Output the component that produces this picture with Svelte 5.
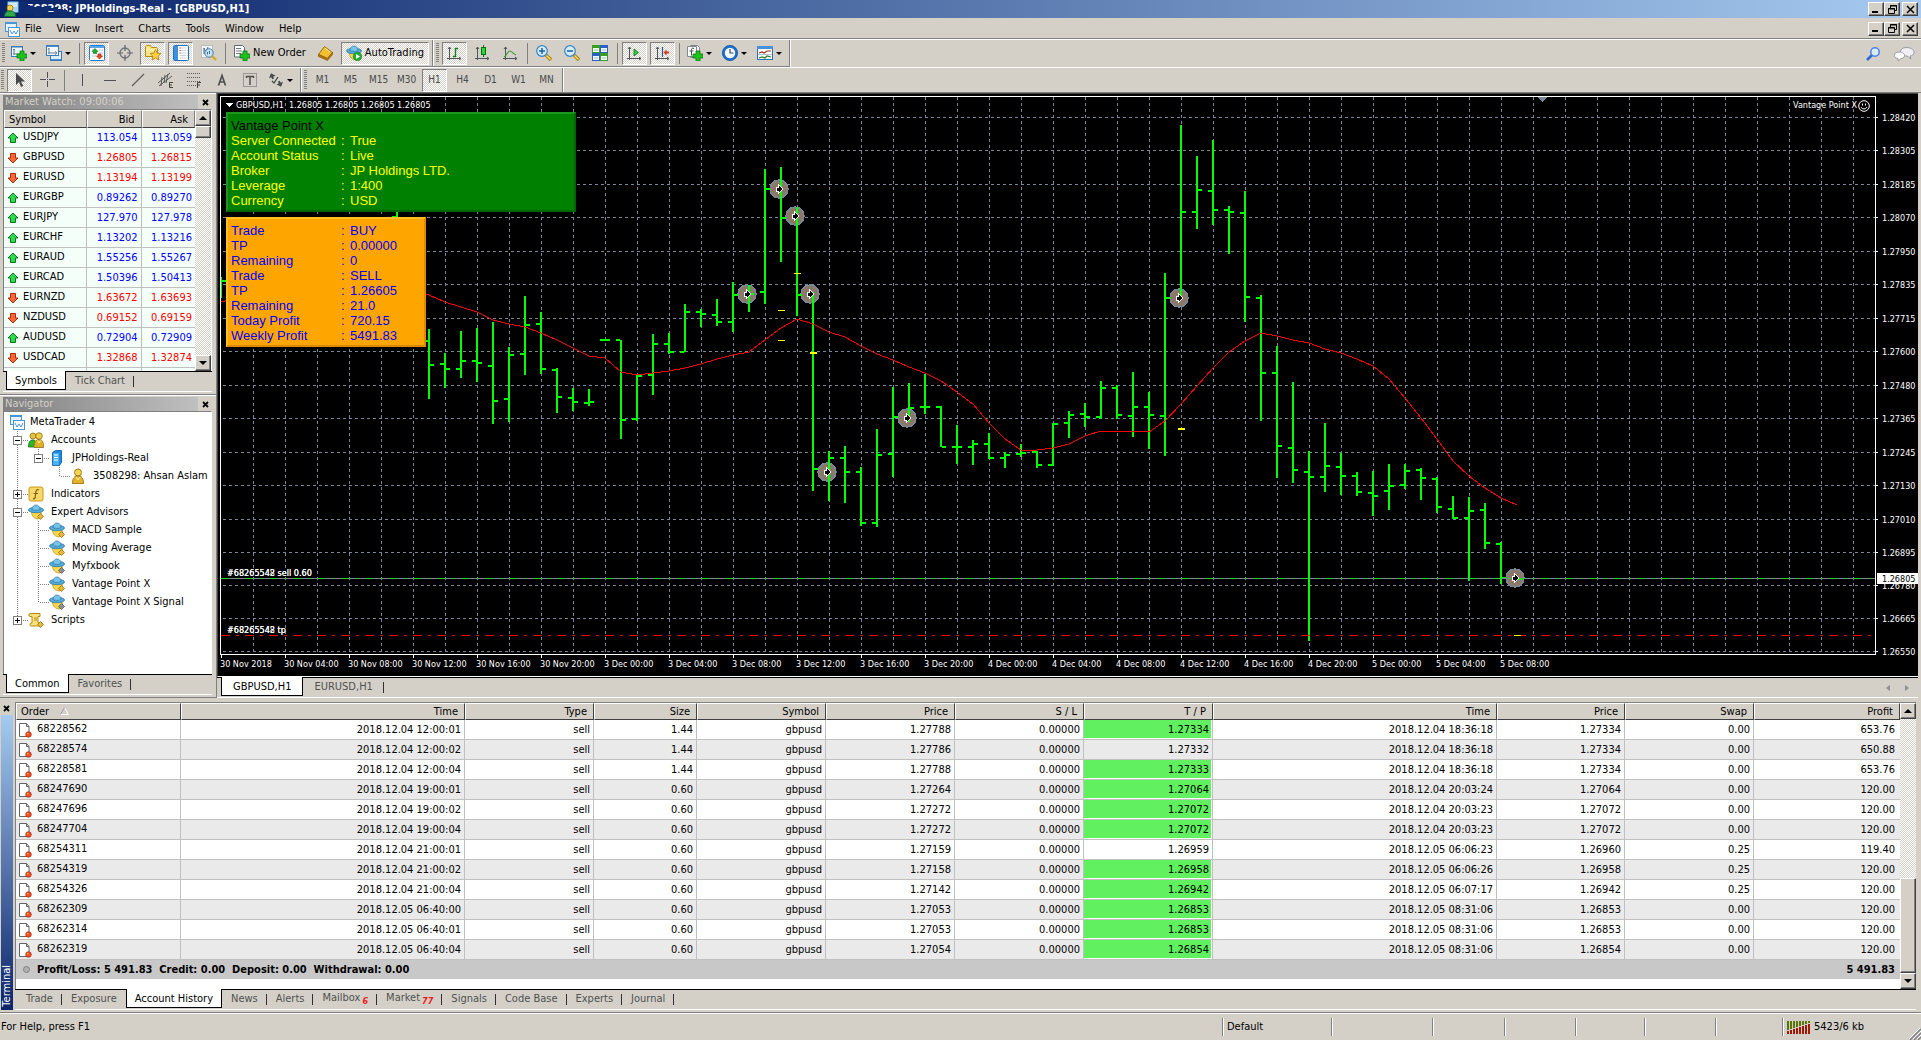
<script>
  const menus = ["File", "View", "Insert", "Charts", "Tools", "Window", "Help"];

  const mainTools = [
    { icon: "newChart", menu: true },
    { icon: "profiles", menu: true },
    { sep: true },
    { icon: "quotes", on: true },
    { icon: "target" },
    { icon: "folder", on: true },
    { icon: "terminal", on: true },
    { icon: "tester" },
    { sep: true },
    { icon: "newOrder", label: "New Order" },
    { icon: "tag" },
    { icon: "expert", label: "AutoTrading", on: true },
    { grip: true },
    { icon: "bars", on: true },
    { icon: "candles" },
    { icon: "line" },
    { sep: true },
    { icon: "zoomIn" },
    { icon: "zoomOut" },
    { icon: "tiles" },
    { sep: true },
    { icon: "scroll", on: true },
    { icon: "shift", on: true },
    { sep: true },
    { icon: "indicator", menu: true },
    { icon: "clock", menu: true },
    { icon: "template", menu: true },
  ];

  const lineTools = [
    { icon: "cursor", on: true },
    { icon: "cross" },
    { sep: true },
    { icon: "vline" },
    { icon: "hline" },
    { icon: "trend" },
    { icon: "channel" },
    { icon: "fibo" },
    { icon: "textA" },
    { icon: "textT" },
    { icon: "arrows", menu: true },
    { grip: true },
  ];

  const timeframes = ["M1", "M5", "M15", "M30", "H1", "H4", "D1", "W1", "MN"];

  const quotes = [
    ["USDJPY", "113.054", "113.059", 1],
    ["GBPUSD", "1.26805", "1.26815", 0],
    ["EURUSD", "1.13194", "1.13199", 0],
    ["EURGBP", "0.89262", "0.89270", 1],
    ["EURJPY", "127.970", "127.978", 1],
    ["EURCHF", "1.13202", "1.13216", 1],
    ["EURAUD", "1.55256", "1.55267", 1],
    ["EURCAD", "1.50396", "1.50413", 1],
    ["EURNZD", "1.63672", "1.63693", 0],
    ["NZDUSD", "0.69152", "0.69159", 0],
    ["AUDUSD", "0.72904", "0.72909", 1],
    ["USDCAD", "1.32868", "1.32874", 0],
  ];

  // rails: one letter per indent cell (b = blank, v = line, t = tee, l = corner)
  const tree = [
    { rails: "", icon: "app", text: "MetaTrader 4" },
    { rails: "t", box: "-", icon: "accounts", text: "Accounts" },
    { rails: "vl", box: "-", icon: "server", text: "JPHoldings-Real" },
    { rails: "vbl", icon: "user", text: "3508298: Ahsan Aslam" },
    { rails: "t", box: "+", icon: "func", text: "Indicators" },
    { rails: "t", box: "-", icon: "advisor", text: "Expert Advisors" },
    { rails: "vt", icon: "advisor", text: "MACD Sample" },
    { rails: "vt", icon: "advisor", text: "Moving Average" },
    { rails: "vt", icon: "advisorOff", text: "Myfxbook" },
    { rails: "vt", icon: "advisor", text: "Vantage Point X" },
    { rails: "vl", icon: "advisorOff", text: "Vantage Point X Signal" },
    { rails: "l", box: "+", icon: "script", text: "Scripts" },
  ];

  const step = 16;

  // slot, high, low, open, close
  const bars = [
    [0, 180, 201, 190, 184], [11, 100, 160, 120, 140],
    [13, 232, 302, 244, 268], [14, 256, 291, 267, 272], [15, 234, 281, 272, 264],
    [16, 231, 285, 264, 266], [17, 225, 327, 269, 304], [18, 250, 325, 302, 258],
    [19, 199, 278, 257, 228], [20, 215, 277, 227, 272], [21, 271, 316, 273, 300],
    [22, 291, 314, 301, 305], [23, 292, 309, 306, 305], [24, 242, 244, 243, 243],
    [25, 243, 342, 243, 323], [26, 278, 324, 322, 279], [27, 237, 298, 278, 247],
    [28, 236, 257, 247, 255], [29, 207, 255, 255, 215], [30, 212, 230, 215, 217],
    [31, 202, 229, 218, 225], [32, 185, 235, 225, 198], [33, 188, 215, 198, 197],
    [34, 72, 207, 195, 92], [35, 70, 165, 92, 121], [36, 110, 219, 120, 198],
    [37, 195, 394, 198, 372], [38, 354, 404, 376, 361], [39, 349, 406, 361, 375],
    [40, 370, 429, 375, 426], [41, 332, 430, 426, 358], [42, 290, 380, 357, 320],
    [43, 286, 325, 321, 311], [44, 277, 317, 310, 310], [45, 309, 350, 310, 350],
    [46, 328, 367, 350, 350], [47, 343, 368, 350, 347], [48, 336, 362, 347, 361],
    [49, 355, 371, 361, 358], [50, 347, 360, 357, 356], [51, 354, 371, 355, 368],
    [52, 326, 369, 368, 327], [53, 314, 341, 326, 318], [54, 306, 330, 317, 320],
    [55, 284, 322, 320, 291], [56, 288, 322, 291, 318], [57, 275, 340, 319, 310],
    [58, 295, 352, 310, 318], [59, 176, 359, 319, 201], [60, 28, 201, 201, 115],
    [61, 59, 132, 115, 93], [62, 43, 128, 94, 113], [63, 109, 157, 113, 115],
    [64, 94, 225, 116, 200], [65, 198, 324, 201, 276], [66, 249, 381, 276, 349],
    [67, 285, 386, 351, 373], [68, 354, 544, 375, 380], [69, 326, 395, 380, 369],
    [70, 356, 398, 370, 379], [71, 375, 399, 379, 395], [72, 374, 419, 396, 399],
    [73, 367, 413, 394, 389], [74, 367, 392, 388, 374], [75, 371, 403, 373, 381],
    [76, 380, 416, 382, 410], [77, 399, 422, 412, 421], [78, 400, 484, 421, 414],
    [79, 406, 452, 413, 446], [80, 445, 487, 447, 481], [81, 481, 483, 482, 482],
  ];

  // moving average, from slot 12 on
  const average = [
    193, 198, 205, 210, 215, 223, 227, 230, 236, 243, 251, 259, 261, 275, 278, 276, 274, 271,
    267, 262, 258, 255, 243, 231, 222, 227, 235, 240, 249, 257, 263, 270, 276, 284, 295, 307,
    326, 342, 353, 353, 351, 347, 339, 334, 334, 334, 335, 324, 307, 289, 271, 255, 244, 236,
    239, 243, 246, 252, 256, 262, 269, 282, 301, 321, 342, 364, 379, 391, 401, 408,
  ];
  const averagePoints =
    "0,204 4,204 " + average.map((y, i) => `${(i + 12) * step},${y}`).join(" ");

  const signals = [
    [558, 92], [574, 119], [526, 197], [589, 197],
    [606, 375], [686, 321], [958, 201], [1294, 481],
  ];

  // x, y, thickness
  const levels = [
    [576, 176, 1], [560, 213, 1], [560, 243, 1],
    [592, 255, 2], [960, 331, 2], [1296, 538, 1],
  ];

  const prices = [
    ["1.28420", 20], ["1.28305", 53], ["1.28185", 87], ["1.28070", 120],
    ["1.27950", 154], ["1.27835", 187], ["1.27715", 221], ["1.27600", 254],
    ["1.27480", 288], ["1.27365", 321], ["1.27245", 355], ["1.27130", 388],
    ["1.27010", 422], ["1.26895", 455], ["1.26780", 488], ["1.26665", 521],
    ["1.26550", 554],
  ];
  const bidY = 481;
  const tpY = 538;

  const times = [
    "30 Nov 2018", "30 Nov 04:00", "30 Nov 08:00", "30 Nov 12:00", "30 Nov 16:00", "30 Nov 20:00",
    "3 Dec 00:00", "3 Dec 04:00", "3 Dec 08:00", "3 Dec 12:00", "3 Dec 16:00", "3 Dec 20:00",
    "4 Dec 00:00", "4 Dec 04:00", "4 Dec 08:00", "4 Dec 12:00", "4 Dec 16:00", "4 Dec 20:00",
    "5 Dec 00:00", "5 Dec 04:00", "5 Dec 08:00",
  ];

  const serverInfo = [
    ["Server Connected", "True"],
    ["Account Status", "Live"],
    ["Broker", "JP Holdings LTD."],
    ["Leverage", "1:400"],
    ["Currency", "USD"],
  ];

  const tradeInfo = [
    ["Trade", "BUY"],
    ["TP", "0.00000"],
    ["Remaining", "0"],
    ["Trade", "SELL"],
    ["TP", "1.26605"],
    ["Remaining", "21.0"],
    ["Today Profit", "720.15"],
    ["Weekly Profit", "5491.83"],
  ];

  const columns = [
    ["Order", 165], ["Time", 284], ["Type", 129], ["Size", 103], ["Symbol", 129],
    ["Price", 129], ["S / L", 129], ["T / P", 129], ["Time", 284], ["Price", 128],
    ["Swap", 129], ["Profit", 146],
  ];

  // order, open time, size, open price, t/p, close time, close price, swap, profit, t/p hit
  const history = [
    ["68228562", "2018.12.04 12:00:01", "1.44", "1.27788", "1.27334", "2018.12.04 18:36:18", "1.27334", "0.00", "653.76", true],
    ["68228574", "2018.12.04 12:00:02", "1.44", "1.27786", "1.27332", "2018.12.04 18:36:18", "1.27334", "0.00", "650.88", false],
    ["68228581", "2018.12.04 12:00:04", "1.44", "1.27788", "1.27333", "2018.12.04 18:36:18", "1.27334", "0.00", "653.76", true],
    ["68247690", "2018.12.04 19:00:01", "0.60", "1.27264", "1.27064", "2018.12.04 20:03:24", "1.27064", "0.00", "120.00", true],
    ["68247696", "2018.12.04 19:00:02", "0.60", "1.27272", "1.27072", "2018.12.04 20:03:23", "1.27072", "0.00", "120.00", true],
    ["68247704", "2018.12.04 19:00:04", "0.60", "1.27272", "1.27072", "2018.12.04 20:03:23", "1.27072", "0.00", "120.00", true],
    ["68254311", "2018.12.04 21:00:01", "0.60", "1.27159", "1.26959", "2018.12.05 06:06:23", "1.26960", "0.25", "119.40", false],
    ["68254319", "2018.12.04 21:00:02", "0.60", "1.27158", "1.26958", "2018.12.05 06:06:26", "1.26958", "0.25", "120.00", true],
    ["68254326", "2018.12.04 21:00:04", "0.60", "1.27142", "1.26942", "2018.12.05 06:07:17", "1.26942", "0.25", "120.00", true],
    ["68262309", "2018.12.05 06:40:00", "0.60", "1.27053", "1.26853", "2018.12.05 08:31:06", "1.26853", "0.00", "120.00", true],
    ["68262314", "2018.12.05 06:40:01", "0.60", "1.27053", "1.26853", "2018.12.05 08:31:06", "1.26853", "0.00", "120.00", true],
    ["68262319", "2018.12.05 06:40:04", "0.60", "1.27054", "1.26854", "2018.12.05 08:31:06", "1.26854", "0.00", "120.00", true],
  ];

  const terminalTabs = [
    ["Trade"], ["Exposure"], ["Account History"], ["News"], ["Alerts"], ["Mailbox", "6"],
    ["Market", "77"], ["Signals"], ["Code Base"], ["Experts"], ["Journal"],
  ];

  const statusCells = [101, 72, 71, 69, 71, 67];

  let frame = $state("H1");
  let terminalTab = $state("Account History");
</script>

{#snippet icon(name)}
  <svg class="icon" width="16" height="16" viewBox="0 0 16 16" aria-hidden="true">
    {#if name === "newChart"}
      <rect x=".5" y="1.5" width="11" height="10" fill="#eaf4fc" stroke="#3c78b4" />
      <path d="M1 2h10" stroke="#3c78b4" />
      <path d="M3 4v6M2 9h8M3 4l-1 1M3 4l1 1" stroke="#6a7c90" fill="none" />
      <path d="M9 6h4v3h3v4h-3v3H9v-3H6V9h3z" fill="#1fc01f" stroke="#087808" stroke-width=".8" />
    {:else if name === "profiles"}
      <rect x="4.5" y="6.5" width="11" height="9" fill="#dcecf8" stroke="#3c78b4" />
      <rect x=".5" y=".5" width="12" height="10" fill="#f4faff" stroke="#3c78b4" />
      <path d="M1 1.5h11M5 14.500h10" stroke="#4a90d0" />
      <path d="M3 3v6M2 8h9M3 3l-1 1.500M9 6.500l2 1.500-2 1.500" stroke="#6a7c90" fill="none" />
    {:else if name === "quotes"}
      <rect x=".5" y=".5" width="15" height="15" rx="1" fill="#fff" stroke="#2878c8" />
      <path d="M1 1h14v2H1z" fill="#58a8f0" />
      <path d="M3 5h3M10 5h4M3 8h2M10 8h4M3 11h4M13 11h1" stroke="#b8c4d0" />
      <path d="M6 3.500l3 3H7.500v2h-3v-2H3z" fill="#20b030" stroke="#087018" stroke-width=".6" />
      <path d="M10.500 14l-3-3H9V9h3v2h1.500z" fill="#f04818" stroke="#902008" stroke-width=".6" />
    {:else if name === "target"}
      <circle cx="8" cy="8" r="5" fill="none" stroke="#70747a" stroke-width="1.300" />
      <path d="M8 0v6M8 10v6M0 8h6M10 8h6" stroke="#60646a" stroke-width="1.200" />
    {:else if name === "folder"}
      <path d="M.5 11.500v-10l1-1h4l1 2h5l1 1v8z" fill="#f8e488" stroke="#b88c10" />
      <path d="M1 5h11" stroke="#fff8c8" />
      <path d="M10.500 4.500l1.700 3.600 3.600.4-2.700 2.600.8 3.900-3.400-2-3.500 2 .8-3.900-2.600-2.600 3.600-.4z" fill="#fcd040" stroke="#b07c08" stroke-width=".8" />
    {:else if name === "terminal"}
      <rect x=".5" y=".5" width="15" height="15" rx="1" fill="#fff" stroke="#2070c0" />
      <rect x="1" y="1" width="4" height="14" fill="#3c90e0" />
      <path d="M7 3h8M7 5.500h8M7 8h8M7 10.500h8M7 13h8" stroke="#c8d4e0" stroke-dasharray="6 1" />
      <path d="M6.500 3h1M6.500 5.500h1M6.500 8h1" stroke="#d02020" />
    {:else if name === "tester"}
      <rect x=".5" y=".5" width="11" height="12" fill="#f4f4f4" stroke="#9098a0" stroke-dasharray="1 1" />
      <path d="M3 9V3l2 4 2-5" stroke="#486890" fill="none" />
      <circle cx="8" cy="8" r="4.200" fill="#bfe0f8" fill-opacity=".85" stroke="#4080b0" />
      <path d="M6.500 9.500V7M8.500 9V6" stroke="#486890" />
      <path d="M11 11l4 4" stroke="#d8a820" stroke-width="2.400" />
    {:else if name === "newOrder"}
      <path d="M.5.5h8l2 2v9.500H.5z" fill="#fff" stroke="#606870" />
      <path d="M2 3.500h5M2 6h6M2 8.500h5" stroke="#707880" stroke-width="1.200" />
      <path d="M9 6h4v3h3v4h-3v3H9v-3H6V9h3z" fill="#1fc01f" stroke="#087808" stroke-width=".8" />
    {:else if name === "tag"}
      <path d="M7.500 1.500l8 6-5 6-9-4z" fill="#f0c030" stroke="#a06808" />
      <path d="M1.500 9.500l9 4 5-6v2l-5 6-9-4z" fill="#b87c10" stroke="#804c00" stroke-width=".6" />
      <path d="M8 3l5 4" stroke="#fff0a0" />
    {:else if name === "expert" || name === "advisor" || name === "advisorOff"}
      <path d="M3.500 8c0 4 3 7 7 7l3-5-1-3z" fill="#f8d848" stroke="#b88810" stroke-width=".7" />
      <ellipse cx="8" cy="6" rx="7.500" ry="2.700" fill="#58acd8" stroke="#2878a8" stroke-width=".8" />
      <path d="M4 5.500C4 -.5 12 -.5 12 5.500c-2 1.200-6 1.200-8 0z" fill="#78c4e8" stroke="#2878a8" stroke-width=".7" />
      {#if name === "expert"}
        <circle cx="11.500" cy="11.500" r="4.300" fill="#20b030" stroke="#087018" stroke-width=".5" />
        <path d="M10 9l4 2.500-4 2.500z" fill="#fff" />
      {:else}
        <path d="M12.500 9.500l3 3-3 3-3-3z" fill={name === "advisor" ? "#e8b838" : "#909090"} stroke={name === "advisor" ? "#987010" : "#585858"} stroke-width=".8" />
      {/if}
    {:else if name === "bars"}
      <path d="M3.500 2v13M1 13.500h14M2 4l1.500-2L5 4M13 12l2 1.500-2 1.500" stroke="#505458" fill="none" />
      <path d="M9.500 3v9M9.500 3.500H12M7 11.500h2.500" stroke="#108018" stroke-width="1.400" />
    {:else if name === "candles"}
      <path d="M3.500 2v13M1 13.500h14M2 4l1.500-2L5 4M13 12l2 1.500-2 1.500" stroke="#505458" fill="none" />
      <path d="M9.500 0v12" stroke="#087010" />
      <rect x="7.500" y="2.500" width="4" height="7" fill="#28d838" stroke="#087010" />
    {:else if name === "line"}
      <path d="M3.500 2v13M1 13.500h14M2 4l1.500-2L5 4M13 12l2 1.500-2 1.500" stroke="#505458" fill="none" />
      <path d="M2 12c3-1 3-6 6-6 2 0 3 3 6 4" stroke="#40983c" stroke-width="1.200" fill="none" />
    {:else if name === "zoomIn" || name === "zoomOut"}
      <path d="M10 10l5 5" stroke="#a87c10" stroke-width="3.400" />
      <path d="M10.500 10.500l4 4" stroke="#f8dc60" stroke-width="1.600" />
      <circle cx="6" cy="6" r="5.300" fill="#d4ecfc" stroke="#3484c8" stroke-width="1.200" />
      <path d="M3 6h6" stroke="#2468a0" stroke-width="1.600" />
      {#if name === "zoomIn"}<path d="M6 3v6" stroke="#2468a0" stroke-width="1.600" />{/if}
    {:else if name === "tiles"}
      <path d="M0 0h8v8H0zM8 8h8v8H8z" fill="#38a020" />
      <path d="M8 0h8v8H8zM0 8h8v8H0z" fill="#2860c8" />
      <path d="M1 3h6v4H1zM9 3h6v4H9zM1 11h6v4H1zM9 11h6v4H9z" fill="#f4f8fc" />
      <path d="M2 5h4M10 5h4M2 13h4M10 13h4" stroke="#a8b4c0" />
    {:else if name === "scroll"}
      <path d="M3.500 2v13M1 13.500h14M2 4l1.500-2L5 4M13 12l2 1.500-2 1.500" stroke="#505458" fill="none" />
      <path d="M8 4l4.500 3.500L8 11z" fill="#30d040" stroke="#087010" stroke-width=".8" />
    {:else if name === "shift"}
      <path d="M3.500 2v13M1 13.500h14M2 4l1.500-2L5 4M13 12l2 1.500-2 1.500" stroke="#505458" fill="none" />
      <path d="M8.500 2v10" stroke="#2060a0" stroke-width="1.200" />
      <path d="M9.500 7.500l3-3v2H15v2h-2.500v2z" fill="#d83810" />
    {:else if name === "indicator"}
      <path d="M3.500.5h7l2 2v10h-9z" fill="#f8f8f8" stroke="#808890" />
      <path d="M.5 1.500h9v10h-9z" fill="#fff" stroke="#808890" />
      <path d="M7 3.500c-2-1-2.500 0-2.500 2v5M2.500 6h4" stroke="#484c50" fill="none" />
      <path d="M9 6h4v3h3v4h-3v3H9v-3H6V9h3z" fill="#1fc01f" stroke="#087808" stroke-width=".8" />
    {:else if name === "clock"}
      <circle cx="8" cy="8" r="6.500" fill="#f4faff" stroke="#1c70d0" stroke-width="2.600" />
      <circle cx="8" cy="8" r="7.600" fill="none" stroke="#0c4898" stroke-width=".6" />
      <path d="M8 4v4h3.500" stroke="#404850" fill="none" stroke-width="1.200" />
    {:else if name === "template"}
      <rect x=".5" y="1.500" width="15" height="13" fill="#fff" stroke="#3070b0" />
      <path d="M0 1h16v3H0z" fill="#4890d8" />
      <path d="M2 8l3-1 2 1 3-2 4 0" stroke="#a03018" fill="none" stroke-width="1.200" />
      <path d="M1 9.500h14" stroke="#b0c4d8" />
      <path d="M2 13l3-1 3 1 2-2 4 1" stroke="#208030" fill="none" stroke-width="1.200" />
    {:else if name === "cursor"}
      <path d="M4 1v12l3-3 2 5 2.200-1L9 9.500h4z" fill="#484848" />
    {:else if name === "cross"}
      <path d="M7.500 0v6M7.500 9v6M0 7.500h6M9 7.500h6M7 7.500h1" stroke="#505050" />
    {:else if name === "vline"}
      <path d="M8.500 2v12" stroke="#505050" />
    {:else if name === "hline"}
      <path d="M2 8.500h12" stroke="#505050" />
    {:else if name === "trend"}
      <path d="M2 14L14 2" stroke="#606060" stroke-width="1.300" />
    {:else if name === "channel"}
      <path d="M0 11L12 1M1 14L14 4M4 5l-1 9M7 3l-1 8M10 2L8 11" stroke="#585858" fill="none" />
      <path d="M15 10.500h-3.500v5H15M11.500 13H14" stroke="#404040" fill="none" />
    {:else if name === "fibo"}
      <path d="M1 1.500h14M1 5.500h14M1 9.500h14M1 13.500h9" stroke="#585858" stroke-dasharray="1 1" />
      <path d="M15 10.500h-3.500V16M11.500 13H14" stroke="#404040" fill="none" />
    {:else if name === "textA"}
      <path d="M4.500 13.500L8 3.500l3.500 10M5.800 10h4.400" stroke="#505050" stroke-width="1.700" fill="none" />
    {:else if name === "textT"}
      <rect x="1.500" y="1.500" width="13" height="13" fill="none" stroke="#606060" stroke-dasharray="1 1" />
      <path d="M4 4.500h8M8 4v9M4.500 4v2M11.500 4v2" stroke="#505050" stroke-width="1.500" />
    {:else if name === "arrows"}
      <path d="M4 1l3.500 4H5v2H3V5H.5z" fill="#484848" transform="rotate(-20 4 4)" />
      <path d="M12 15l-3.500-4H11V9h2v2h2.500z" fill="#484848" transform="rotate(-20 12 12)" />
      <path d="M4 9l2 2 4-6" stroke="#484848" fill="none" stroke-width="1.300" />
    {:else if name === "app"}
      <rect x="1.500" y="1.500" width="11" height="9" fill="#e4f2fc" stroke="#4c94d8" />
      <path d="M1 1h12v2H1z" fill="#4c94d8" />
      <rect x="4.500" y="6.500" width="11" height="9" fill="#fff" stroke="#4c94d8" />
      <path d="M6 9l2 4 2-3 2 3 2-4" stroke="#4c94d8" fill="none" />
    {:else if name === "logo"}
      <rect x="4.500" y=".5" width="11" height="11" rx="1" fill="#a8d4f4" stroke="#3c78b4" />
      <path d="M6 3h8M6 5h8" stroke="#fff" />
      <circle cx="7" cy="7" r="3" fill="#f4d450" stroke="#987408" stroke-width=".8" />
      <path d="M1.500 15.500c0-4 2-5.500 5.500-5.500s5.500 1.500 5.500 5.500z" fill="#30a850" stroke="#0c6820" stroke-width=".8" />
    {:else if name === "accounts"}
      <circle cx="5" cy="4" r="3" fill="#e8c040" stroke="#907010" stroke-width=".8" />
      <path d="M.5 15c0-6 2-7 4.500-7s4 2 4 7z" fill="#28b828" stroke="#107010" stroke-width=".8" />
      <circle cx="11" cy="4" r="3.300" fill="#f0cc48" stroke="#907010" stroke-width=".8" />
      <path d="M6 15.500c0-6 2-8 5-8s4.700 2 4.700 8z" fill="#e0b028" stroke="#907010" stroke-width=".8" />
      <path d="M9.500 8.500l1.500 2.500 1.500-2.500" stroke="#fff4b0" fill="none" />
    {:else if name === "server"}
      <path d="M3.500 2.500l3-2h6v12l-2 3h-7z" fill="#1c88e0" stroke="#0c58a0" stroke-width=".8" />
      <path d="M4 3h6v12H4z" fill="#48b4f8" />
      <path d="M5 5h4M5 7.500h4M5 10h4" stroke="#fff" />
    {:else if name === "user"}
      <circle cx="8" cy="4.500" r="3.500" fill="#f4d450" stroke="#987408" stroke-width=".9" />
      <path d="M2.500 15.500C2.500 10 4.500 8 8 8s5.500 2 5.500 7.500z" fill="#e4b42c" stroke="#987408" stroke-width=".9" />
      <path d="M6 9l2 3 2-3" stroke="#fff4b0" fill="none" />
    {:else if name === "func"}
      <rect x="1" y="1" width="14" height="14" rx="2" fill="#f8d868" stroke="#c89818" />
      <path d="M11 4c-2.500-1-3 .5-3.200 3L7 12c-.3 1-1 1-2 .6M5.500 7.500h4.500" stroke="#806010" fill="none" stroke-width="1.200" />
    {:else if name === "script"}
      <path d="M2 1.500h10v3H10V11h2v3H3c-1.500 0-1.500-3 0-3h1V4.500H2c-1.500 0-1.500-3 0-3z" fill="#f8e07c" stroke="#b08c18" />
      <path d="M6 6h3M6 8h3" stroke="#b08c18" />
      <path d="M12.500 9.500l3 3-3 3-3-3z" fill="#e8b838" stroke="#987010" stroke-width=".8" />
    {:else if name === "up"}
      <path d="M8 3l5 5h-2.500v4.500h-5V8H3z" fill="#30d850" stroke="#087820" />
    {:else if name === "down"}
      <path d="M8 13L3 8h2.500V3.500h5V8H13z" fill="#f86838" stroke="#a82c08" />
    {:else if name === "order"}
      <path d="M2.500 1.500h7l2.500 3v10h-9.500z" fill="#fff" stroke="#606468" />
      <path d="M9.500 1.500v3H12" fill="none" stroke="#606468" />
      <circle cx="11.500" cy="12.500" r="2.800" fill="#f05020" stroke="#a02808" stroke-width=".7" />
      <circle cx="10.800" cy="11.700" r=".8" fill="#ffb8a0" />
    {/if}
  </svg>
{/snippet}

{#snippet tool(t)}
  {#if t.sep}
    <span class="sep"></span>
  {:else if t.grip}
    <span class="band-end"></span><span class="grip"></span>
  {:else}
    <button class="tool" class:on={t.on} class:menu={t.menu} class:wide={t.label} aria-label={t.label ?? t.icon}>
      {@render icon(t.icon)}
      {#if t.label}{t.label}{/if}
      {#if t.menu}<span class="caret"></span>{/if}
    </button>
  {/if}
{/snippet}

{#snippet closeMark()}
  <svg width="7" height="7" aria-hidden="true"><path d="M1 1l5 5M6 1L1 6" stroke="#000" stroke-width="1.800" /></svg>
{/snippet}

{#snippet windowButtons()}
  <div class="window-buttons">
    <button aria-label="Minimize"><svg width="11" height="9"><path d="M1 7h6" stroke="#000" stroke-width="2" /></svg></button>
    <button aria-label="Restore">
      <svg width="11" height="9"><path d="M3.500 3V.5h6v5H8M3 1h7M1.500 3.500h6v5h-6zM1 4h7" stroke="#000" fill="none" /></svg>
    </button>
    <button class="close" aria-label="Close"><svg width="11" height="9"><path d="M2 1l7 7M9 1L2 8" stroke="#000" stroke-width="1.500" /></svg></button>
  </div>
{/snippet}

{#snippet scrollbar(grow, size)}
  <div class="scrollbar">
    <button aria-label="Scroll up"><span class="arrow-up"></span></button>
    {#if grow}<span class="track"></span>{/if}
    <span class="thumb" style="height: {size}px"></span>
    {#if !grow}<span class="track"></span>{/if}
    <button aria-label="Scroll down"><span class="arrow-down"></span></button>
  </div>
{/snippet}

<div class="app">
  <header class="titlebar">
    {@render icon("logo")}
    <h1>3508298: JPHoldings-Real - [GBPUSD,H1]</h1>
    <svg class="smudge" width="56" height="14" aria-hidden="true">
      <path d="M0 0h9v3h2v1h3v1h4v-1h4v1h4v-1h5v2h4v-1h4v2h5v1h4v6h-6v-3h-7v-2h-6v3h-6v2h-8v-2h-7v1H0z" fill="#0f2b71" />
    </svg>
    {@render windowButtons()}
  </header>

  <nav class="menubar">
    {@render icon("app")}
    {#each menus as item}
      <button>{item}</button>
    {/each}
    {@render windowButtons()}
  </nav>

  <div class="toolbar">
    <div class="band">
      <span class="grip"></span>
      {#each mainTools as t}{@render tool(t)}{/each}
    </div>
    <div class="extras">
      <button aria-label="Search">
        <svg width="16" height="16" viewBox="0 0 16 16">
          <path d="M7 9l-5 5" stroke="#3468d0" stroke-width="2.600" />
          <circle cx="10" cy="6" r="4.200" fill="#d8ecfc" stroke="#4c80e0" stroke-width="1.500" />
        </svg>
      </button>
      <button aria-label="Chat">
        <svg width="22" height="16" viewBox="0 0 22 16">
          <path d="M13 1.500c10 0 10 8 4 8.500l1 3-4-3c-8 0-9-8-1-8.500z" fill="#f0f0f4" stroke="#9a9aa2" />
          <path d="M6 6c7 0 7 6 2 6.500l-3 2.500v-2.500C0 12 0 6 6 6z" fill="#fff" stroke="#9a9aa2" />
        </svg>
      </button>
    </div>
  </div>

  <div class="toolbar second">
    <div class="band">
      <span class="grip"></span>
      {#each lineTools as t}{@render tool(t)}{/each}
      {#each timeframes as tf}
        <button class="tool frame" class:on={frame === tf} onclick={() => (frame = tf)}>{tf}</button>
      {/each}
    </div>
  </div>

  <main>
    <aside>
      <section class="panel">
        <div class="panel-title"><h2>Market Watch: 09:00:06</h2><button aria-label="Close">{@render closeMark()}</button></div>
        <div class="panel-body quotes">
          <table>
            <thead>
              <tr><th>Symbol</th><th>Bid</th><th>Ask</th></tr>
            </thead>
            <tbody>
              {#each quotes as [symbol, bid, ask, up]}
                <tr class:up>
                  <td>{@render icon(up ? "up" : "down")}{symbol}</td>
                  <td>{bid}</td>
                  <td>{ask}</td>
                </tr>
              {/each}
              <tr class="rest"><td></td><td></td><td></td></tr>
            </tbody>
          </table>
          {@render scrollbar(false, 12)}
        </div>
        <div class="tabs">
          <button class="active">Symbols</button>
          <button>Tick Chart</button>
        </div>
      </section>

      <section class="panel navigator">
        <div class="panel-title"><h2>Navigator</h2><button aria-label="Close">{@render closeMark()}</button></div>
        <ul class="panel-body tree">
          {#each tree as node}
            <li>
              {#each node.rails.split("") as rail, i}
                <span class="rail {rail}">
                  {#if node.box && i === node.rails.length - 1}<span class="box" class:plus={node.box === "+"}></span>{/if}
                </span>
              {/each}
              {@render icon(node.icon)}
              <span class="name">{node.text}</span>
            </li>
          {/each}
        </ul>
        <div class="tabs">
          <button class="active">Common</button>
          <button>Favorites</button>
        </div>
      </section>
    </aside>

    <section class="chart">
      <div class="chart-window">
        <div class="chart-row">
          <div class="plot">
            <svg class="plot-canvas" shape-rendering="crispEdges">
              <g class="grid">
                {#each Array(64) as _, i}
                  <line x1={(i + 1) * 32 + 0.5} x2={(i + 1) * 32 + 0.5} y1="0" y2="100%" />
                {/each}
                {#each prices as [, y]}
                  <line x1="2" x2="100%" y1={y + 0.5} y2={y + 0.5} />
                {/each}
              </g>
              {#each signals as [x, y]}
                <circle cx={x} cy={y} r="9" fill="#8c7868" stroke="#778899" stroke-width="1.500" />
              {/each}
              <g fill="#00ff00">
                {#each bars as [slot, high, low, open, close]}
                  <rect x={slot * step - 1} y={high} width="2" height={low - high} />
                  <rect x={slot * step - 5} y={open - 1} width="4" height="2" />
                  <rect x={slot * step + 1} y={close - 1} width="4" height="2" />
                {/each}
              </g>
              <polyline points={averagePoints} fill="none" stroke="#ff0000" />
              <line x1="0" x2="100%" y1={bidY + 0.5} y2={bidY + 0.5} stroke="#778899" />
              <line x1="0" x2="100%" y1={bidY + 0.5} y2={bidY + 0.5} stroke="#32cd32" stroke-dasharray="9 6 3 6" />
              <line x1="0" x2="100%" y1={tpY + 0.5} y2={tpY + 0.5} stroke="#ff0000" stroke-dasharray="9 6 3 6" />
              {#each levels as [x, y, weight]}
                <rect x={x - 3} {y} width="7" height={weight} fill="#ffff00" />
              {/each}
              {#each signals as [x, y]}
                <path d="M{x - 3} {y - 2}h2v-3l5 5-5 5v-3h-2z" fill="#000" stroke="#fff" />
              {/each}
              <path d="M1316 0h10l-5 5z" fill="#778899" />
              <path d="M4 6h8l-4 4z" fill="#fff" />
            </svg>
            <div class="chart-title">GBPUSD,H1&nbsp; 1.26805 1.26805 1.26805 1.26805</div>
            <div class="expert-name">
              Vantage Point X
              <svg width="12" height="12" viewBox="0 0 12 12" aria-hidden="true">
                <circle cx="6" cy="6" r="5.300" fill="none" stroke="#fff" />
                <path d="M4.500 3.500v2M7.500 3.500v2M3 7c1 2.500 5 2.500 6 0" stroke="#fff" fill="none" />
              </svg>
            </div>
            <svg class="order-labels">
              {#each ["68265542", "68265548"] as order}
                <text x="6" y={bidY - 2}>#{order} sell 0.60</text>
                <text x="6" y={tpY - 2}>#{order} tp</text>
              {/each}
            </svg>
            <div class="overlay">
              <dl class="info server">
                <dt class="heading">Vantage Point X</dt>
                {#each serverInfo as [label, value]}
                  <div><dt>{label}</dt><span>:</span><dd>{value}</dd></div>
                {/each}
              </dl>
              <dl class="info trade">
                {#each tradeInfo as [label, value]}
                  <div><dt>{label}</dt><span>:</span><dd>{value}</dd></div>
                {/each}
              </dl>
            </div>
          </div>
          <svg class="price-axis">
            {#each prices as [label, y]}
              <path d="M0 {y + 0.5}h2" stroke="#fff" />
              <text x="6" y={y + 4}>{label}</text>
            {/each}
            <rect x="1" y={bidY - 5} width="41" height="11" fill="#fff" />
            <text x="6" y={bidY + 4} class="bid">1.26805</text>
          </svg>
        </div>
        <svg class="time-axis">
          {#each times as label, i}
            <path d="M{i * 64 + 1.5} 0v3" stroke="#fff" />
            <text x={i * 64} y="12">{label}</text>
          {/each}
        </svg>
      </div>
      <div class="tabs chart-tabs">
        <button class="active">GBPUSD,H1</button>
        <button>EURUSD,H1</button>
        <span class="tab-scroll"><i class="left"></i><i class="right"></i></span>
      </div>
    </section>
  </main>

  <section class="terminal">
    <div class="side">
      <button aria-label="Close">{@render closeMark()}</button>
      <h2><span>Terminal</span></h2>
    </div>
    <div class="terminal-body">
      <div class="history">
        <table>
          <colgroup>
            {#each columns as [, width]}<col style="width: {width}px" />{/each}
          </colgroup>
          <thead>
            <tr>
              {#each columns as [label], i}
                <th>{label}{#if i === 0}<svg class="sort" width="9" height="8"><path d="M.5 7.500L4.500.5l4 7z" fill="none" stroke="#fff" /><path d="M.5 7.500L4.500.5" stroke="#909090" /></svg>{/if}</th>
              {/each}
            </tr>
          </thead>
          <tbody>
            {#each history as [order, opened, size, price, tp, closed, closePrice, swap, profit, hit]}
              <tr>
                <td>{@render icon("order")}{order}</td>
                <td>{opened}</td>
                <td>sell</td>
                <td>{size}</td>
                <td>gbpusd</td>
                <td>{price}</td>
                <td>0.00000</td>
                <td class:hit>{tp}</td>
                <td>{closed}</td>
                <td>{closePrice}</td>
                <td>{swap}</td>
                <td>{profit}</td>
              </tr>
            {/each}
          </tbody>
          <tfoot>
            <tr>
              <td colspan="11"><span class="dot"></span>Profit/Loss: 5 491.83&nbsp; Credit: 0.00&nbsp; Deposit: 0.00&nbsp; Withdrawal: 0.00</td>
              <td>5 491.83</td>
            </tr>
          </tfoot>
        </table>
        {@render scrollbar(true, 95)}
      </div>
      <div class="tabs terminal-tabs">
        {#each terminalTabs as [label, count]}
          <button class:active={terminalTab === label} onclick={() => (terminalTab = label)}>
            {label}{#if count}<b>{count}</b>{/if}
          </button>
        {/each}
      </div>
    </div>
  </section>

  <footer>
    <span class="help">For Help, press F1</span>
    <span class="cell profile">Default</span>
    {#each statusCells as width}
      <span class="cell" style="width: {width}px"></span>
    {/each}
    <span class="cell traffic">
      <svg width="23" height="13" shape-rendering="crispEdges" aria-hidden="true">
        {#each Array(8) as _, i}
          <rect x={i * 3} y="0" width="2" height={9 - i} fill="#5a7808" />
          <rect x={i * 3} y={10 - i} width="2" height={3 + i} fill="#a01808" />
        {/each}
      </svg>
      5423/6 kb
    </span>
    <svg class="resize" width="12" height="12" aria-hidden="true">
      <path d="M1 12L12 1M5 12l7-7M9 12l3-3" stroke="#808080" stroke-width="1.500" />
      <path d="M0 11L11 0M4 11l8-8M8 11l4-4" stroke="#fff" />
    </svg>
  </footer>
</div>

<style>
  :global(body) {
    margin: 0;
    background: #d4d0c8;
  }

  .app {
    --face: #d4d0c8;
    --checker: repeating-conic-gradient(#fff 0 25%, #d4d0c8 0 50%) 0 0 / 2px 2px;
    display: flex;
    flex-direction: column;
    min-height: 100vh;
    background: var(--face);
    color: #000;
    font: 11px/14px "DejaVu Sans Condensed", "Noto Sans", sans-serif;
    overflow: hidden;
  }

  .app *,
  .app {
    box-sizing: border-box;
  }

  button {
    margin: 0;
    padding: 0;
    border: 0;
    background: none;
    color: inherit;
    font: inherit;
  }

  h1,
  h2 {
    margin: 0;
    font: inherit;
  }

  .icon {
    flex: none;
    display: block;
  }

  .titlebar {
    position: relative;
    display: flex;
    align-items: center;
    height: 18px;
    padding: 0 3px;
    background: linear-gradient(90deg, #0a246a, #a6caf0);
    color: #fff;
  }

  h1 {
    flex: 1;
    padding-left: 1px;
    font-weight: bold;
  }

  .smudge {
    position: absolute;
    left: 19px;
    top: 2px;
  }

  .window-buttons {
    display: flex;
  }

  .window-buttons button {
    display: flex;
    align-items: center;
    justify-content: center;
    width: 16px;
    height: 14px;
    background: var(--face);
    border: 1px solid;
    border-color: #fff #404040 #404040 #fff;
    box-shadow: inset -1px -1px #808080;
  }

  .window-buttons .close {
    margin-left: 2px;
  }

  .menubar {
    display: flex;
    align-items: center;
    height: 21px;
    padding: 1px 3px 0 4px;
    border-bottom: 1px solid #808080;
  }

  .menubar > button {
    padding: 0 8px 0 7px;
  }

  .menubar > .icon {
    margin: 0 -2px 0 0;
  }

  .menubar .window-buttons {
    margin-left: auto;
  }

  .toolbar {
    display: flex;
    justify-content: space-between;
    height: 28px;
    border-top: 1px solid #fff;
  }

  .toolbar.second {
    height: 26px;
    border-bottom: 1px solid #808080;
  }

  .band {
    display: flex;
    align-items: center;
    padding-left: 2px;
    border-right: 1px solid #808080;
    border-bottom: 1px solid #808080;
    box-shadow: 1px 0 #fff;
  }

  .second .band {
    padding-left: 1px;
    border-bottom: 0;
  }

  .grip {
    width: 3px;
    height: 20px;
    margin-right: 3px;
    background: repeating-linear-gradient(#808080 0 1px, var(--face) 1px 2px);
  }

  .band-end {
    align-self: stretch;
    width: 2px;
    margin-right: 2px;
    border-left: 1px solid #808080;
    border-right: 1px solid #fff;
  }

  .sep {
    width: 1px;
    height: 21px;
    margin: 0 4px 0 1px;
    background: #808080;
  }

  .tool {
    display: flex;
    align-items: center;
    justify-content: center;
    width: 25px;
    height: 23px;
    margin-right: 3px;
    white-space: nowrap;
  }

  .tool.menu {
    justify-content: flex-start;
    gap: 3px;
    width: 35px;
    margin: 0;
    padding-left: 3px;
  }

  .tool.wide {
    gap: 3px;
    width: auto;
    padding: 0 4px;
  }

  .tool.on {
    background: var(--checker);
    border: 1px solid;
    border-color: #808080 #fff #fff #808080;
  }

  .frame {
    color: #484848;
    font-size: 10px;
  }

  .caret {
    border: solid transparent;
    border-width: 3px 3px 0;
    border-top-color: #000;
  }

  .extras {
    display: flex;
    align-items: center;
    gap: 12px;
    padding-right: 6px;
  }

  .extras svg {
    display: block;
  }

  main {
    flex: 1;
    display: flex;
  }

  aside {
    display: flex;
    flex-direction: column;
    width: 217px;
    border-right: 1px solid #808080;
  }

  .panel {
    display: flex;
    flex-direction: column;
    padding: 1px 4px 2px 3px;
    border-top: 1px solid #fff;
    border-bottom: 1px solid #808080;
  }

  .navigator {
    flex: 1;
  }

  .panel-title {
    display: flex;
    height: 14px;
  }

  .panel-title h2 {
    flex: 1;
    padding-left: 2px;
    background: linear-gradient(90deg, #808080, #c0c0c0);
    color: #d4d0c8;
  }

  .panel-title button,
  .side button {
    display: flex;
    align-items: center;
    justify-content: center;
    width: 14px;
  }

  .panel-body {
    flex: 1;
    margin: 0;
    border: 1px solid;
    border-color: #808080 #fff #000 #808080;
    background: #fff;
  }

  .quotes {
    display: flex;
    border-bottom: 0;
  }

  table {
    flex: 1;
    border-collapse: separate;
    border-spacing: 0;
    table-layout: fixed;
  }

  td,
  th {
    padding: 0 3px 0 0;
    text-align: right;
    white-space: nowrap;
    overflow: hidden;
  }

  td:first-child .icon {
    float: left;
  }

  th {
    height: 17px;
    padding-right: 6px;
    background: var(--face);
    border: 1px solid;
    border-color: #fff #808080 #404040 #fff;
    font-weight: normal;
    line-height: 13px;
  }

  td {
    height: 20px;
    border-right: 1px solid #c0c0c0;
    border-bottom: 1px solid #c0c0c0;
  }

  td:first-child,
  th:first-child {
    text-align: left;
  }

  .quotes th {
    height: 18px;
  }

  .quotes th:first-child {
    width: 83px;
    padding-left: 4px;
  }

  .quotes td {
    background: #f5fffa;
    color: #ff0000;
  }

  .quotes td:first-child {
    color: #000;
    padding-left: 1px;
  }

  .quotes td:first-child .icon {
    margin-right: 2px;
  }

  .quotes td:last-child {
    border-right: 0;
  }

  .quotes .up td:not(:first-child) {
    color: #0000ff;
  }

  .quotes .rest td {
    height: 3px;
    border-bottom: 0;
    padding: 0;
  }

  .scrollbar {
    display: flex;
    flex-direction: column;
    width: 16px;
    background: var(--checker);
  }

  .scrollbar button,
  .thumb {
    display: grid;
    place-items: center;
    height: 16px;
    background: var(--face);
    border: 1px solid;
    border-color: #fff #404040 #404040 #fff;
    box-shadow: inset -1px -1px #808080;
  }

  .track {
    flex: 1;
  }

  .arrow-up,
  .arrow-down {
    border: 4px solid transparent;
    border-top-width: 0;
    border-bottom-color: #000;
  }

  .arrow-down {
    border-width: 4px 4px 0;
    border-color: #000 transparent transparent;
  }

  .tree {
    padding: 1px 0 0 3px;
    border-bottom: 0;
    list-style: none;
  }

  .tree li {
    display: flex;
    align-items: center;
    height: 18px;
  }

  .tree li:first-child {
    padding-left: 2px;
  }

  .name {
    padding-left: 7px;
    white-space: nowrap;
  }

  .tree li:first-child .name {
    padding-left: 5px;
  }

  .rail {
    position: relative;
    width: 21px;
    height: 18px;
  }

  .rail.v,
  .rail.t,
  .rail.l {
    background: repeating-linear-gradient(#808080 0 1px, #fff 1px 2px) 10px 0 / 1px 100% no-repeat;
  }

  .rail.l {
    background-size: 1px 10px;
  }

  .rail.t::after,
  .rail.l::after {
    content: "";
    position: absolute;
    left: 11px;
    top: 9px;
    width: 10px;
    height: 1px;
    background: repeating-linear-gradient(90deg, #fff 0 1px, #808080 1px 2px);
  }

  .box {
    position: absolute;
    z-index: 1;
    left: 6px;
    top: 5px;
    width: 9px;
    height: 9px;
    border: 1px solid #808080;
    background: linear-gradient(#000, #000) 1px 3px / 5px 1px no-repeat #fff;
  }

  .box.plus {
    background:
      linear-gradient(#000, #000) 1px 3px / 5px 1px no-repeat,
      linear-gradient(#000, #000) 3px 1px / 1px 5px no-repeat,
      #fff;
  }

  .tabs {
    display: flex;
    align-items: flex-start;
    height: 21px;
    padding-left: 3px;
    border-top: 1px solid #000;
    border-bottom: 1px solid #fff;
    color: #505050;
  }

  .tabs button {
    position: relative;
    height: 17px;
    padding: 0 9px;
    line-height: 16px;
  }

  .tabs button:not(.active)::after {
    content: "";
    position: absolute;
    right: 0;
    top: 4px;
    width: 1px;
    height: 11px;
    background: #303030;
  }

  .tabs .active {
    margin-top: -1px;
    height: 19px;
    padding: 1px 8px 0;
    background: #fff;
    border: 1px solid #000;
    border-top: 0;
    color: #000;
  }

  .terminal-tabs button:has(+ .active)::after {
    display: none;
  }

  .tabs b {
    margin-left: 2px;
    color: #f01818;
    font-size: 9px;
    font-style: italic;
    vertical-align: -3px;
  }

  .chart {
    flex: 1;
    display: flex;
    flex-direction: column;
    min-width: 0;
    padding-right: 3px;
  }

  .chart-window {
    flex: 1;
    display: flex;
    flex-direction: column;
    padding: 2px 0 0 2px;
    border: solid;
    border-width: 1px 0 1px 1px;
    border-color: #404040 #fff #fff #404040;
    background: #000;
    color: #fff;
    font-size: 9px;
    line-height: 11px;
  }

  .chart-row {
    flex: 1;
    display: flex;
  }

  .plot {
    position: relative;
    flex: 1;
    min-height: 559px;
    border: 1px solid #fff;
    overflow: hidden;
  }

  .plot-canvas,
  .order-labels {
    position: absolute;
    inset: 0;
    width: 100%;
    height: 100%;
  }

  .grid line {
    stroke: #778899;
    stroke-dasharray: 3 3;
  }

  .chart-title {
    position: absolute;
    left: 15px;
    top: 3px;
  }

  .expert-name {
    position: absolute;
    right: 5px;
    top: 3px;
    display: flex;
    gap: 1px;
  }

  text {
    fill: #fff;
  }

  text.bid {
    fill: #000;
  }

  .overlay {
    position: absolute;
    left: 5px;
    top: 15px;
    display: grid;
    gap: 5px;
    justify-items: start;
    font: 13px/15px "Liberation Sans", sans-serif;
  }

  .info {
    margin: 0;
    padding: 4px 3px 2px;
    border: 2px solid;
  }

  .info div {
    display: flex;
  }

  .info div dt {
    width: 110px;
  }

  .info span {
    width: 9px;
  }

  .info dd {
    margin: 0;
  }

  .server {
    width: 350px;
    border-color: #1c961c #006400 #006400 #1c961c;
    background: #008000;
    color: #ffff00;
  }

  .heading {
    color: #000;
  }

  .trade {
    width: 200px;
    border-color: #ffc020 #e08800 #e08800 #ffc020;
    background: #ffa500;
    color: #0000ff;
  }

  .price-axis {
    width: 42px;
    height: auto;
    margin-top: 1px;
    overflow: visible;
  }

  .time-axis {
    width: 100%;
    height: 21px;
  }

  .chart-tabs {
    align-items: stretch;
    padding-left: 4px;
  }

  .chart-tabs button {
    padding: 0 11px;
  }

  .chart-tabs .active {
    padding: 1px 11px 0;
  }

  .tab-scroll {
    display: flex;
    align-items: center;
    gap: 15px;
    margin-left: auto;
    padding-right: 9px;
  }

  .tab-scroll i {
    border: 3px solid transparent;
    border-left: 4px solid #909090;
    border-right: 0;
  }

  .tab-scroll .left {
    border-left: 0;
    border-right: 4px solid #909090;
  }

  .terminal {
    display: flex;
    padding: 4px 5px 2px 1px;
    border-bottom: 1px solid #808080;
  }

  .side {
    display: flex;
    flex-direction: column;
    width: 14px;
    padding-right: 2px;
  }

  .side button {
    width: 11px;
    height: 13px;
  }

  .side h2 {
    flex: 1;
    display: flex;
    align-items: flex-end;
    background: linear-gradient(#a6caf0, #0a246a);
    color: #fff;
  }

  .side span {
    padding: 3px 0;
    writing-mode: vertical-rl;
    rotate: 180deg;
    line-height: 12px;
  }

  .terminal-body {
    flex: 1;
    border-top: 1px solid #808080;
  }

  .history {
    display: flex;
    align-items: stretch;
    height: 286px;
    border-left: 1px solid #808080;
    background: #fff;
  }

  .history table {
    width: 100%;
    align-self: flex-start;
  }

  .history th {
    border-right-color: #404040;
  }

  .history th:first-child {
    padding-left: 4px;
  }

  .sort {
    margin-left: 11px;
  }

  .history tbody tr:nth-child(even) {
    background: #eaeaea;
  }

  .history td:first-child .icon {
    margin: 0 4px 0 1px;
  }

  .history td.hit {
    background: #60f060;
    box-shadow: inset -1px -1px #fff;
  }

  .history td:last-child {
    padding-right: 5px;
    border-right: 0;
  }

  tfoot td {
    height: 19px;
    background: #c8c8c8;
    border: 0;
    font-weight: bold;
  }

  .dot {
    display: inline-block;
    width: 7px;
    height: 7px;
    margin: 0 7px 0 7px;
    border: 1px solid #808080;
    border-radius: 50%;
    background: #b0b0b0;
  }

  .history .scrollbar {
    flex: none;
  }

  .terminal-tabs {
    padding-left: 2px;
  }

  footer {
    display: flex;
    align-items: center;
    height: 27px;
    padding-left: 1px;
    border-top: 1px solid #fff;
  }

  .help {
    flex: 1;
  }

  .cell {
    display: flex;
    align-items: center;
    gap: 4px;
    height: 18px;
    padding-left: 4px;
    border-left: 1px solid #808080;
    box-shadow: inset 1px 0 #fff;
  }

  .profile {
    width: 109px;
  }

  .traffic {
    width: 127px;
  }

  .resize {
    align-self: flex-end;
  }
</style>
